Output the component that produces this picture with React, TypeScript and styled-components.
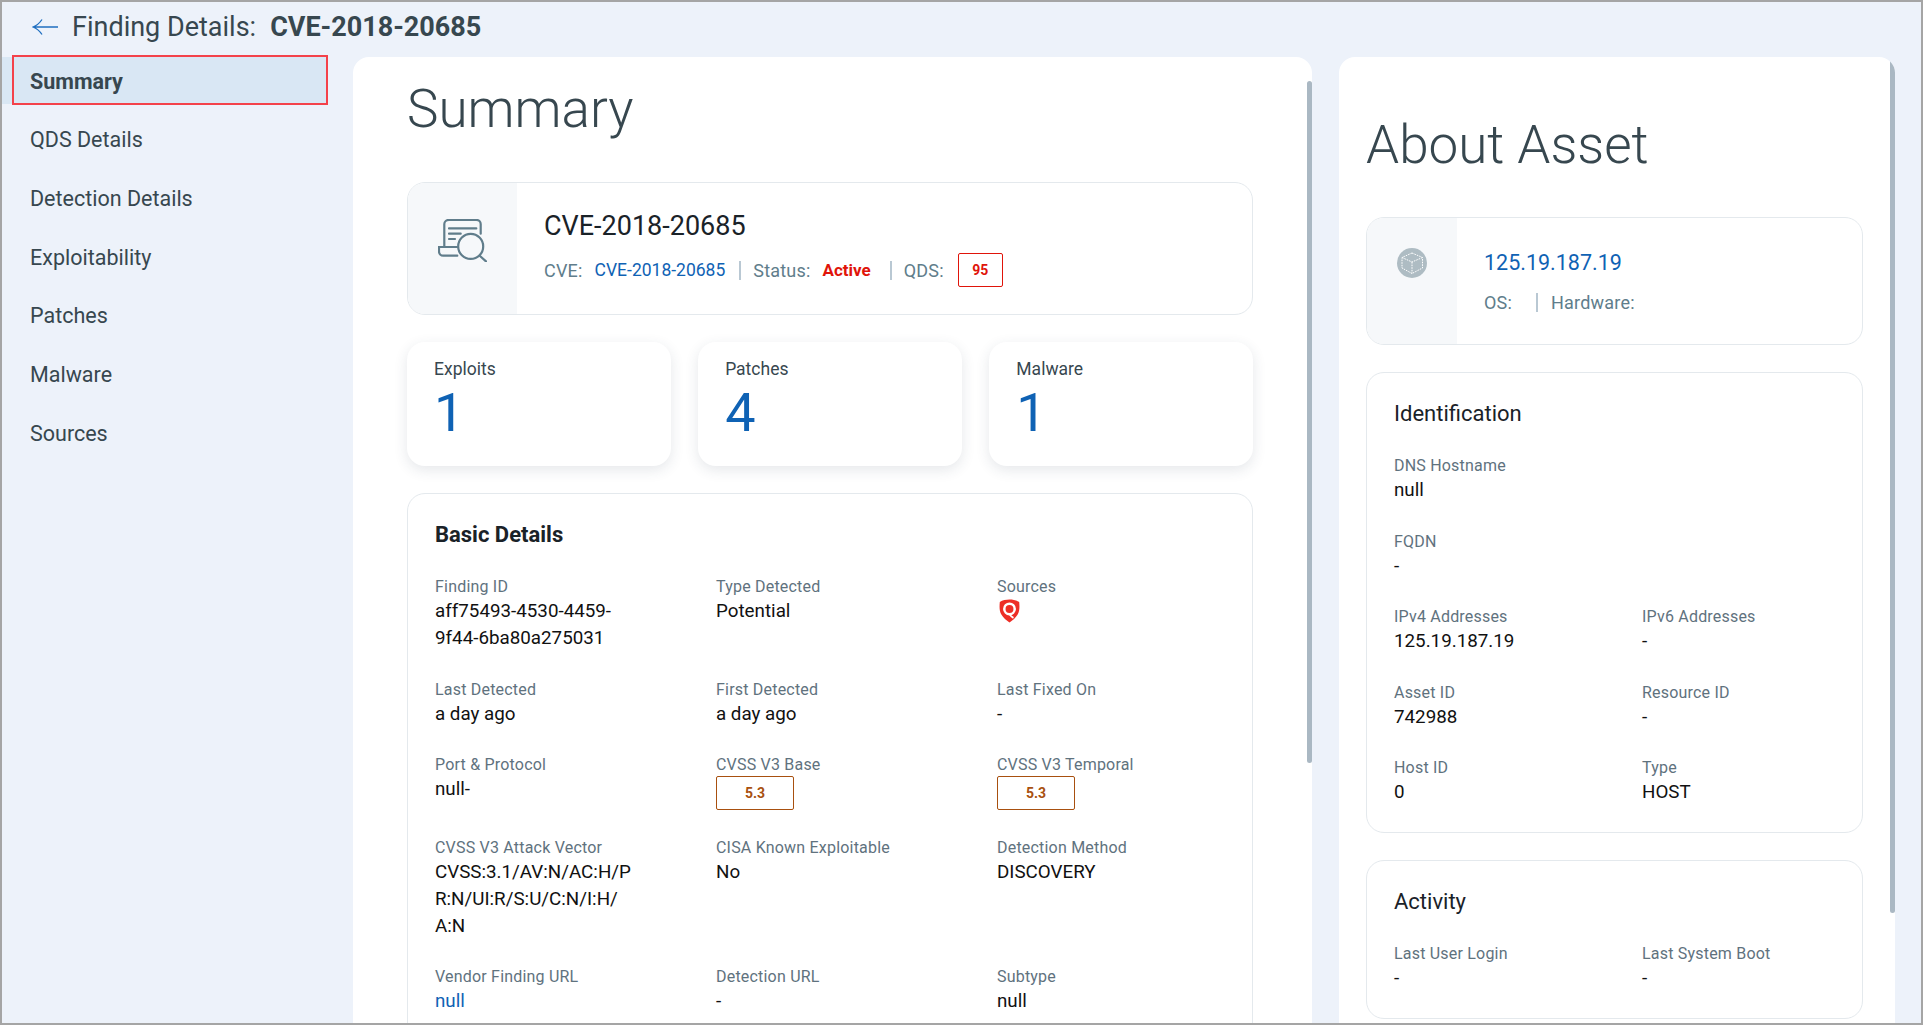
import React from "react";
import styled, { createGlobalStyle } from "styled-components";

const GlobalStyle = createGlobalStyle`
    html, body {
        margin: 0;
        padding: 0;
        height: 100%;
        overflow: hidden;
    }
    body {
        font-family: Roboto, "Liberation Sans", sans-serif;
        background: #edf2fa;
    }
    * {
        box-sizing: border-box;
    }
`;

const Frame = styled.div`
    width: 1923px;
    height: 1025px;
    border: 2px solid #a5a5a5;
    background: #edf2fa;
    display: flex;
    flex-direction: column;
    overflow: hidden;
`;

const Header = styled.header`
    height: 55px;
    flex: none;
    display: flex;
    align-items: center;
    padding: 0 0 5px 30px;
    font-size: 27px;
    color: #37474f;
`;

const BackIcon = styled.svg`
    width: 26px;
    height: 18px;
    margin-right: 14px;
`;

const HeaderId = styled.strong`
    font-weight: 700;
    margin-left: 14px;
`;

const Body = styled.div`
    flex: 1;
    min-height: 0;
    display: flex;
    padding-right: 26px;
`;

const Sidebar = styled.nav`
    width: 351px;
    flex: none;
    display: flex;
    flex-direction: column;
    gap: 11.7px;
`;

const NavItem = styled.div<{ $active?: boolean }>`
    position: relative;
    width: 325px;
    height: 47px;
    flex: none;
    display: flex;
    align-items: center;
    padding: 1px 0 0 28px;
    font-size: 21.5px;
    font-weight: ${(p) => (p.$active ? 700 : 400)};
    color: #37474f;
    background: ${(p) => (p.$active ? "#d9e7f4" : "transparent")};

    ${(p) =>
        p.$active &&
        `
        &::after {
            content: "";
            position: absolute;
            left: 10px;
            right: -1px;
            top: -2px;
            bottom: -1px;
            border: 2px solid #f4424a;
        }
    `}
`;

const Panel = styled.section<{ $wide?: boolean }>`
    position: relative;
    width: ${(p) => (p.$wide ? "959px" : "556px")};
    flex: none;
    margin-right: ${(p) => (p.$wide ? "27px" : "0")};
    padding: ${(p) => (p.$wide ? "20px 59px 0 54px" : "56px 32px 0 27px")};
    background: #fff;
    border-radius: 16px 16px 0 0;
    overflow: hidden;
`;

const ScrollThumb = styled.div<{ $top: number; $height: number }>`
    position: absolute;
    right: 0;
    top: ${(p) => p.$top}px;
    width: 5px;
    height: ${(p) => p.$height}px;
    border-radius: 3px;
    background: #aab8c3;
`;

const PageTitle = styled.h1<{ $gap: number }>`
    margin: 0 0 ${(p) => p.$gap}px;
    font-size: 53px;
    line-height: 64px;
    font-weight: 300;
    color: #37474f;
`;

const Card = styled.div<{ $gap?: number }>`
    border: 1px solid #e4e9ed;
    border-radius: 18px;
    margin-bottom: ${(p) => p.$gap ?? 0}px;
    background: #fff;
    overflow: hidden;
`;

const HeroCard = styled(Card)<{ $height: number }>`
    display: flex;
    height: ${(p) => p.$height}px;
`;

const HeroIcon = styled.div<{ $width: number; $pad: number }>`
    width: ${(p) => p.$width}px;
    flex: none;
    display: flex;
    justify-content: center;
    align-items: flex-start;
    padding-top: ${(p) => p.$pad}px;
    background: #f6f8fa;
`;

const HeroBody = styled.div<{ $pad: number }>`
    padding: ${(p) => p.$pad}px 0 0 27px;
`;

const HeroTitle = styled.div`
    font-size: 27px;
    line-height: 32px;
    color: #1a2228;
    margin-bottom: 11px;
`;

const HeroLink = styled.div`
    font-size: 21.5px;
    line-height: 28px;
    color: #0f62b4;
    margin-bottom: 13px;
`;

const Meta = styled.div`
    display: flex;
    align-items: center;
    min-height: 24px;
    font-size: 18px;
    letter-spacing: 0.2px;
    color: #607d8b;
`;

const MetaText = styled.span<{ $after?: number }>`
    margin-right: ${(p) => p.$after ?? 0}px;
    white-space: pre;
`;

const MetaLink = styled(MetaText)`
    font-size: 17.5px;
    letter-spacing: 0;
    color: #0f62b4;
`;

const MetaAlert = styled(MetaText)`
    font-size: 17px;
    letter-spacing: 0;
    color: #e0140a;
    font-weight: 700;
`;

const MetaDivider = styled.span<{ $after: number }>`
    width: 2px;
    height: 19px;
    background: #b9c8d3;
    margin-right: ${(p) => p.$after}px;
`;

const ScoreBox = styled.span<{ $tone: string; $width: number }>`
    width: ${(p) => p.$width}px;
    height: 34px;
    display: flex;
    align-items: center;
    justify-content: center;
    border: 1px solid ${(p) => p.$tone};
    border-radius: 2px;
    color: ${(p) => p.$tone};
    font-size: 14px;
    letter-spacing: 0;
    font-weight: 700;
`;

const StatGrid = styled.div`
    display: grid;
    grid-template-columns: repeat(3, 1fr);
    gap: 27.5px;
    margin: 27px 0 27px;
`;

const StatCard = styled.div`
    height: 124px;
    padding: 16px 27px 0;
    border-radius: 18px;
    background: #fff;
    box-shadow: 0 4px 14px rgba(40, 60, 80, 0.12);
`;

const StatLabel = styled.div`
    font-size: 17.5px;
    line-height: 22px;
    color: #37474f;
`;

const StatValue = styled.div`
    font-size: 54px;
    line-height: 56px;
    margin-top: 5px;
    color: #0f62b4;
`;

const InfoCard = styled(Card)`
    padding: 27px 26px 26px 27px;
`;

const InfoHeading = styled.h2<{ $bold?: boolean }>`
    margin: 0 0 27px;
    font-size: 22px;
    line-height: 28px;
    font-weight: ${(p) => (p.$bold ? 700 : 400)};
    color: #1a2228;
`;

const FieldGrid = styled.div<{ $cols: number; $colWidth: number }>`
    display: grid;
    grid-template-columns: repeat(${(p) => p.$cols}, ${(p) => p.$colWidth}px);
    row-gap: 26.5px;
`;

const Field = styled.div``;

const FieldLabel = styled.div`
    font-size: 16px;
    letter-spacing: 0.2px;
    line-height: 22px;
    color: #5f727e;
`;

const FieldValue = styled.div<{ $link?: boolean; $breakAll?: boolean }>`
    max-width: 198px;
    font-size: 18.8px;
    line-height: 27px;
    color: ${(p) => (p.$link ? "#0f62b4" : "#111")};
    overflow-wrap: anywhere;
    word-break: ${(p) => (p.$breakAll ? "break-all" : "normal")};
`;

const SourceIcon = styled.svg`
    display: block;
    width: 21px;
    height: 24px;
    margin: 1px 0 0 2px;
`;

const FindingIcon = () => (
    <svg width="49" height="43" viewBox="0 0 49 43" fill="none" stroke="#607d8b" strokeWidth="2.2" strokeLinecap="round">
        <path d="M6.3 27.4V5C6.3 2.5 8.5.9 11 .9h27.3c2.5 0 4.4 1.7 4.4 4.1v9.7" />
        <path d="M19.3 28H1v4.5c0 2.4 1.8 4.2 4.2 4.2h14.1" />
        <path d="M11 9.4h27.3M11 14.7h11.7M11 20h6" />
        <circle cx="32.7" cy="27.4" r="12.5" />
        <path d="M41.7 36.7l6.6 6" />
    </svg>
);

const AssetIcon = () => (
    <svg width="30" height="30" viewBox="0 0 30 30">
        <circle cx="15" cy="15" r="15" fill="#aebcc3" />
        <g fill="none" stroke="#fff" strokeWidth="1" strokeDasharray="1.6 1">
            <path d="M15 5l10.5 4.5V20L15 25.5 5 20V9.5z" />
            <path d="M5 9.5L15 14l10.5-4.5M15 14v11.5" />
        </g>
    </svg>
);

const QualysIcon = () => (
    <SourceIcon viewBox="0 0 20 23">
        <path d="M10 .5c3.2 0 6.7.8 9.3 2.3.4 5 .5 8.6-1.5 12C16 18 13 20.5 10 22.5 7 20.5 4 18 2.2 14.8.2 11.4.3 7.800.7 2.800 3.300 1.300 6.800.5 10 .5z" fill="#ed2e26" />
        <circle cx="10" cy="9.5" r="5" fill="none" stroke="#fff" strokeWidth="2.4" />
        <path d="M10 14.500c1 1.700 2.300 2.800 3.800 3.500" fill="none" stroke="#fff" strokeWidth="1.8" />
    </SourceIcon>
);

type Item = { label: string; value: React.ReactNode; link?: boolean; breakAll?: boolean };

const basicDetails: Item[] = [
    { label: "Finding ID", value: "aff75493-4530-4459-9f44-6ba80a275031" },
    { label: "Type Detected", value: "Potential" },
    { label: "Sources", value: <QualysIcon /> },
    { label: "Last Detected", value: "a day ago" },
    { label: "First Detected", value: "a day ago" },
    { label: "Last Fixed On", value: "-" },
    { label: "Port & Protocol", value: "null-" },
    { label: "CVSS V3 Base", value: <ScoreBox $tone="#a8500f" $width={78}>5.3</ScoreBox> },
    { label: "CVSS V3 Temporal", value: <ScoreBox $tone="#a8500f" $width={78}>5.3</ScoreBox> },
    { label: "CVSS V3 Attack Vector", value: "CVSS:3.1/AV:N/AC:H/PR:N/UI:R/S:U/C:N/I:H/A:N", breakAll: true },
    { label: "CISA Known Exploitable", value: "No" },
    { label: "Detection Method", value: "DISCOVERY" },
    { label: "Vendor Finding URL", value: "null", link: true },
    { label: "Detection URL", value: "-" },
    { label: "Subtype", value: "null" },
];

const identification: Item[] = [
    { label: "DNS Hostname", value: "null" },
    { label: "", value: "" },
    { label: "FQDN", value: "-" },
    { label: "", value: "" },
    { label: "IPv4 Addresses", value: "125.19.187.19" },
    { label: "IPv6 Addresses", value: "-" },
    { label: "Asset ID", value: "742988" },
    { label: "Resource ID", value: "-" },
    { label: "Host ID", value: "0" },
    { label: "Type", value: "HOST" },
];

const activity: Item[] = [
    { label: "Last User Login", value: "-" },
    { label: "Last System Boot", value: "-" },
];

const navItems = ["Summary", "QDS Details", "Detection Details", "Exploitability", "Patches", "Malware", "Sources"];
const stats = [
    { label: "Exploits", value: 1 },
    { label: "Patches", value: 4 },
    { label: "Malware", value: 1 },
];

const renderFields = (items: Item[]) =>
    items.map((item, index) => (
        <Field key={index}>
            {item.label && <FieldLabel>{item.label}</FieldLabel>}
            {item.label && (
                <FieldValue $link={item.link} $breakAll={item.breakAll}>
                    {item.value}
                </FieldValue>
            )}
        </Field>
    ));

export default function App() {
    return (
        <Frame>
            <GlobalStyle />
            <Header>
                <BackIcon viewBox="0 0 26 18" fill="none" stroke="#1f6fc0" strokeWidth="1.3">
                    <path d="M26 9H1M10 1.500C8 4.500 5 7.500 1 9c4 1.500 7 4.500 9 7.500" />
                </BackIcon>
                Finding Details:
                <HeaderId>CVE-2018-20685</HeaderId>
            </Header>
            <Body>
                <Sidebar>
                    {navItems.map((name, index) => (
                        <NavItem key={name} $active={index === 0}>
                            {name}
                        </NavItem>
                    ))}
                </Sidebar>
                <Panel $wide>
                    <ScrollThumb $top={24} $height={682} />
                    <PageTitle $gap={41}>Summary</PageTitle>
                    <HeroCard $height={133}>
                        <HeroIcon $width={109} $pad={36}>
                            <FindingIcon />
                        </HeroIcon>
                        <HeroBody $pad={27}>
                            <HeroTitle>CVE-2018-20685</HeroTitle>
                            <Meta>
                                <MetaText $after={12}>CVE:</MetaText>
                                <MetaLink $after={14}>CVE-2018-20685</MetaLink>
                                <MetaDivider $after={12} />
                                <MetaText $after={12}>Status:</MetaText>
                                <MetaAlert $after={19}>Active</MetaAlert>
                                <MetaDivider $after={12} />
                                <MetaText $after={14}>QDS:</MetaText>
                                <ScoreBox $tone="#e0140a" $width={45}>95</ScoreBox>
                            </Meta>
                        </HeroBody>
                    </HeroCard>
                    <StatGrid>
                        {stats.map((stat) => (
                            <StatCard key={stat.label}>
                                <StatLabel>{stat.label}</StatLabel>
                                <StatValue>{stat.value}</StatValue>
                            </StatCard>
                        ))}
                    </StatGrid>
                    <InfoCard>
                        <InfoHeading $bold>Basic Details</InfoHeading>
                        <FieldGrid $cols={3} $colWidth={281}>
                            {renderFields(basicDetails)}
                        </FieldGrid>
                    </InfoCard>
                </Panel>
                <Panel>
                    <ScrollThumb $top={0} $height={856} />
                    <PageTitle $gap={40}>About Asset</PageTitle>
                    <HeroCard $height={128} $gap={27}>
                        <HeroIcon $width={90} $pad={30}>
                            <AssetIcon />
                        </HeroIcon>
                        <HeroBody $pad={31}>
                            <HeroLink>125.19.187.19</HeroLink>
                            <Meta>
                                <MetaText $after={24}>OS:</MetaText>
                                <MetaDivider $after={13} />
                                <MetaText>Hardware:</MetaText>
                            </Meta>
                        </HeroBody>
                    </HeroCard>
                    <InfoCard $gap={27}>
                        <InfoHeading>Identification</InfoHeading>
                        <FieldGrid $cols={2} $colWidth={248}>
                            {renderFields(identification)}
                        </FieldGrid>
                    </InfoCard>
                    <InfoCard>
                        <InfoHeading>Activity</InfoHeading>
                        <FieldGrid $cols={2} $colWidth={248}>
                            {renderFields(activity)}
                        </FieldGrid>
                    </InfoCard>
                </Panel>
            </Body>
        </Frame>
    );
}
